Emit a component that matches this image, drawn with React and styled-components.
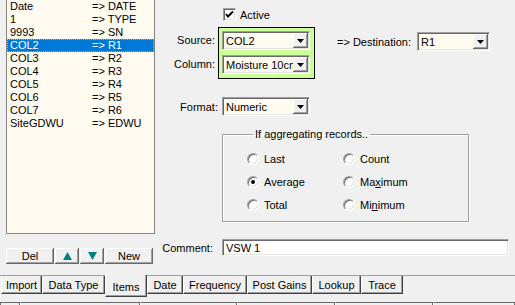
import React from 'react';
import styled, { createGlobalStyle } from 'styled-components';

const Global = createGlobalStyle`
  html, body { margin: 0; padding: 0; background: #f0f0f0; }
  body {
    font-family: "Liberation Sans", Arial, sans-serif;
    font-size: 11px;
    color: #000;
    overflow: hidden;
  }
  * { box-sizing: border-box; }
`;

const Window = styled.div`
  width: 515px;
  height: 305px;
  display: flex;
  flex-direction: column;
  overflow: hidden;
  background: #f0f0f0;
`;

const Main = styled.div`
  display: flex;
  height: 275px;
  flex: none;
`;

const LeftCol = styled.div`
  width: 149px;
  margin-left: 6px;
  display: flex;
  flex-direction: column;
  flex: none;
`;

const ListBox = styled.div`
  height: 234px;
  background: #fffbf0;
  border: 1px solid #828282;
  border-top: none;
  display: flex;
  flex-direction: column;
`;

const ListRow = styled.div`
  display: grid;
  grid-template-columns: 82px 1fr;
  height: 13px;
  line-height: 13px;
  padding-left: 3px;
  white-space: nowrap;
  background: ${p => (p.$selected ? '#0078d7' : 'transparent')};
  color: ${p => (p.$selected ? '#fff' : '#000')};
  outline: ${p => (p.$selected ? '1px dotted #ff9a3c' : 'none')};
  outline-offset: -1px;
`;

const ButtonRow = styled.div`
  display: flex;
  gap: 1px;
  margin-top: 14px;
  height: 16px;
`;

const ToolButton = styled.div`
  width: ${p => p.$w}px;
  height: 16px;
  display: flex;
  align-items: center;
  justify-content: center;
  background: #f0f0f0;
  box-shadow: inset -1px -1px 0 #696969, inset 1px 1px 0 #fff, inset -2px -2px 0 #a0a0a0;
  line-height: 13px;
`;

const RightPanel = styled.div`
  flex: 1;
  display: flex;
  flex-direction: column;
  padding-top: 8px;
`;

const CheckRow = styled.label`
  display: flex;
  align-items: center;
  gap: 4px;
  margin-left: 68px;
  height: 13px;
`;

const CheckBox = styled.span`
  width: 13px;
  height: 13px;
  background: #fff;
  border: 1px solid;
  border-color: #a0a0a0 #fff #fff #a0a0a0;
  box-shadow: inset 1px 1px 0 #696969, inset -1px -1px 0 #e3e3e3;
  display: flex;
  align-items: center;
  justify-content: center;
`;

const SourceBlock = styled.div`
  display: flex;
  align-items: flex-start;
  margin-top: 6px;
`;

const LabelStack = styled.div`
  width: 63px;
  padding-right: 3px;
  padding-top: 4px;
  display: flex;
  flex-direction: column;
  gap: 5px;
  text-align: right;
`;

const StackLabel = styled.div`
  height: 19px;
  line-height: 19px;
`;

const GreenBox = styled.div`
  width: 97px;
  height: 52px;
  background: #ccff99;
  border: 1px solid #000;
  padding: 3px 4px 4px 3px;
  display: flex;
  flex-direction: column;
  gap: 5px;
`;

const DestGroup = styled.div`
  display: flex;
  align-items: center;
  gap: 6px;
  margin-left: 22px;
  margin-top: 5px;
`;

const ComboBox = styled.div`
  width: ${p => p.$w}px;
  height: ${p => p.$h || 19}px;
  background: #fffbf0;
  border: 1px solid;
  border-color: #a0a0a0 #fff #fff #a0a0a0;
  box-shadow: inset 1px 1px 0 #696969, inset -1px -1px 0 #e3e3e3;
  display: flex;
  align-items: stretch;
  padding: 1px;
  flex: none;
`;

const ComboText = styled.div`
  flex: 1;
  padding-left: 2px;
  display: flex;
  align-items: center;
  white-space: nowrap;
  overflow: hidden;
`;

const ComboButton = styled.div`
  width: 15px;
  background: #f0f0f0;
  box-shadow: inset -1px -1px 0 #696969, inset 1px 1px 0 #fff, inset -2px -2px 0 #a0a0a0;
  display: flex;
  align-items: center;
  justify-content: center;
  flex: none;
`;

const FormRow = styled.div`
  display: flex;
  align-items: center;
  margin-top: ${p => p.$top}px;
`;

const FieldLabel = styled.div`
  width: ${p => p.$w}px;
  margin-right: ${p => p.$gap}px;
  text-align: right;
  white-space: nowrap;
`;

const GroupBox = styled.fieldset`
  margin: 12px 0 0 67px;
  padding: 6px 0 5px 24px;
  width: 247px;
  border: 1px solid #a0a0a0;
  box-shadow: inset 1px 1px 0 #fff, 1px 1px 0 #fff;
  min-width: 0;
`;

const GroupTitle = styled.legend`
  margin-left: 6px;
  padding: 0 2px;
  line-height: 13px;
  height: 13px;
`;

const RadioGrid = styled.div`
  display: grid;
  grid-template-columns: 96px 96px;
  grid-auto-rows: 23px;
`;

const RadioItem = styled.div`
  display: flex;
  align-items: center;
  gap: 5px;
`;

const RadioCircle = styled.span`
  width: 12px;
  height: 12px;
  border-radius: 50%;
  background: #fff;
  border: 1px solid;
  border-color: #a0a0a0 #fff #fff #a0a0a0;
  box-shadow: inset 1px 1px 0 #696969, inset -1px -1px 0 #e3e3e3;
  display: flex;
  align-items: center;
  justify-content: center;
  &::after {
    content: '';
    width: 4px;
    height: 4px;
    border-radius: 50%;
    background: ${p => (p.$checked ? '#000' : 'transparent')};
  }
`;

const Accel = styled.span`
  text-decoration: underline;
`;

const TextInput = styled.div`
  width: ${p => p.$w}px;
  height: 17px;
  background: #fff;
  border: 1px solid;
  border-color: #a0a0a0 #fff #fff #a0a0a0;
  box-shadow: inset 1px 1px 0 #696969, inset -1px -1px 0 #e3e3e3;
  padding-left: 3px;
  display: flex;
  align-items: center;
`;

const TabStrip = styled.div`
  height: 27px;
  flex: none;
  display: flex;
  align-items: flex-start;
  border-top: 1px solid #a0a0a0;
  padding-left: 1px;
`;

const Tab = styled.div`
  width: ${p => p.$w}px;
  height: ${p => (p.$active ? 22 : 18)}px;
  margin-top: ${p => (p.$active ? -1 : 0)}px;
  background: #f0f0f0;
  border-left: 1px solid #fff;
  border-right: 1px solid #404040;
  border-bottom: 1px solid #404040;
  box-shadow: inset -1px -1px 0 #a0a0a0;
  display: flex;
  align-items: center;
  justify-content: center;
  padding-top: ${p => (p.$active ? 2 : 0)}px;
  white-space: nowrap;
  flex: none;
`;

const StatusBar = styled.div`
  display: flex;
  height: 20px;
  flex: none;
`;

const StatusPanel = styled.div`
  width: ${p => p.$w}px;
  flex: ${p => (p.$w ? 'none' : '1')};
  border-top: 1px solid #696969;
  border-left: 1px solid ${p => (p.$first ? '#696969' : '#fff')};
  border-right: 1px solid #696969;
`;

const Arrow = ({ up }) => (
  <svg width="9" height="8" viewBox="0 0 9 8">
    <polygon points={up ? '4.5,0 9,8 0,8' : '0,0 9,0 4.5,8'} fill="#008080" />
  </svg>
);

const DropArrow = () => (
  <svg width="7" height="4" viewBox="0 0 7 4">
    <polygon points="0,0 7,0 3.5,4" fill="#000" />
  </svg>
);

const Combo = ({ w, h, children }) => (
  <ComboBox $w={w} $h={h}>
    <ComboText>{children}</ComboText>
    <ComboButton>
      <DropArrow />
    </ComboButton>
  </ComboBox>
);

const Radio = ({ checked, children }) => (
  <RadioItem>
    <RadioCircle $checked={checked} />
    <span>{children}</span>
  </RadioItem>
);

const rows = [
  ['Date', '=> DATE'],
  ['1', '=> TYPE'],
  ['9993', '=> SN'],
  ['COL2', '=> R1'],
  ['COL3', '=> R2'],
  ['COL4', '=> R3'],
  ['COL5', '=> R4'],
  ['COL6', '=> R5'],
  ['COL7', '=> R6'],
  ['SiteGDWU', '=> EDWU'],
];

const tabs = [
  ['Import', 41],
  ['Data Type', 63],
  ['Items', 42],
  ['Date', 36],
  ['Frequency', 64],
  ['Post Gains', 65],
  ['Lookup', 49],
  ['Trace', 42],
];

const statusWidths = [20, 120, 97, 98, 98];

export default function App() {
  return (
    <Window>
      <Global />
      <Main>
        <LeftCol>
          <ListBox>
            {rows.map(([a, b], i) => (
              <ListRow key={i} $selected={i === 3}>
                <span>{a}</span>
                <span>{b}</span>
              </ListRow>
            ))}
          </ListBox>
          <ButtonRow>
            <ToolButton $w={48}>Del</ToolButton>
            <ToolButton $w={24}><Arrow up /></ToolButton>
            <ToolButton $w={24}><Arrow /></ToolButton>
            <ToolButton $w={48}>New</ToolButton>
          </ButtonRow>
        </LeftCol>
        <RightPanel>
          <CheckRow>
            <CheckBox>
              <svg width="9" height="9" viewBox="0 0 9 9">
                <polyline points="1,4 3,6.5 8,1.5" fill="none" stroke="#000" strokeWidth="2" />
              </svg>
            </CheckBox>
            <span>Active</span>
          </CheckRow>
          <SourceBlock>
            <LabelStack>
              <StackLabel>Source:</StackLabel>
              <StackLabel>Column:</StackLabel>
            </LabelStack>
            <GreenBox>
              <Combo w={88}>COL2</Combo>
              <Combo w={88}>Moisture 10cm</Combo>
            </GreenBox>
            <DestGroup>
              <span>=&gt; Destination:</span>
              <Combo w={73}>R1</Combo>
            </DestGroup>
          </SourceBlock>
          <FormRow $top={18}>
            <FieldLabel $w={63} $gap={4}>Format:</FieldLabel>
            <Combo w={88}>Numeric</Combo>
          </FormRow>
          <GroupBox>
            <GroupTitle>If aggregating records..</GroupTitle>
            <RadioGrid>
              <Radio>Last</Radio>
              <Radio>Count</Radio>
              <Radio checked>Average</Radio>
              <Radio>Ma<Accel>x</Accel>imum</Radio>
              <Radio>Total</Radio>
              <Radio>Mi<Accel>n</Accel>imum</Radio>
            </RadioGrid>
          </GroupBox>
          <FormRow $top={17}>
            <FieldLabel $w={58} $gap={9}>Comment:</FieldLabel>
            <TextInput $w={287}>VSW 1</TextInput>
          </FormRow>
        </RightPanel>
      </Main>
      <TabStrip>
        {tabs.map(([t, w]) => (
          <Tab key={t} $w={w} $active={t === 'Items'}>{t}</Tab>
        ))}
      </TabStrip>
      <StatusBar>
        {statusWidths.map((w, i) => (
          <StatusPanel key={i} $w={w} $first={i === 0} />
        ))}
        <StatusPanel />
      </StatusBar>
    </Window>
  );
}
